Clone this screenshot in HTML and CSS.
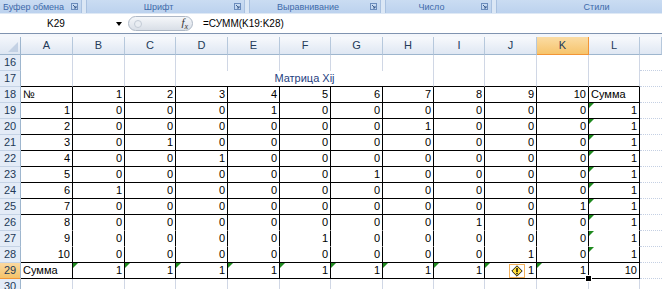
FILE: index.html
```html
<!DOCTYPE html>
<html lang="ru">
<head>
  <meta charset="UTF-8" />
  <title>Матрица Xij</title>
  <link rel="stylesheet" href="styles.css">
</head>
<body>

  <div class="ribbon">
    <div class="group g1"><span class="label">Буфер обмена</span><span class="launch"><svg width="7" height="7" viewBox="0 0 7 7"><rect x="0.5" y="0.5" width="6" height="6" fill="none" stroke="#6b8cbc"/><path d="M2 2 L5 5 M5 3 V5 H3" fill="none" stroke="#3f5f8f"/></svg></span></div>
    <div class="group g2"><span class="label">Шрифт</span><span class="launch"><svg width="7" height="7" viewBox="0 0 7 7"><rect x="0.5" y="0.5" width="6" height="6" fill="none" stroke="#6b8cbc"/><path d="M2 2 L5 5 M5 3 V5 H3" fill="none" stroke="#3f5f8f"/></svg></span></div>
    <div class="group g3"><span class="label">Выравнивание</span><span class="launch"><svg width="7" height="7" viewBox="0 0 7 7"><rect x="0.5" y="0.5" width="6" height="6" fill="none" stroke="#6b8cbc"/><path d="M2 2 L5 5 M5 3 V5 H3" fill="none" stroke="#3f5f8f"/></svg></span></div>
    <div class="group g4"><span class="label">Число</span><span class="launch"><svg width="7" height="7" viewBox="0 0 7 7"><rect x="0.5" y="0.5" width="6" height="6" fill="none" stroke="#6b8cbc"/><path d="M2 2 L5 5 M5 3 V5 H3" fill="none" stroke="#3f5f8f"/></svg></span></div>
    <div class="group g5"><span class="label">Стили</span></div>
  </div>

  <div class="fbar">
    <div class="namebox"><span class="name">K29</span><span class="arrow"></span></div>
    <div class="pill"><span class="grip"></span><span class="fx">f<sub>x</sub></span></div>
    <div class="formula">=СУММ(K19:K28)</div>
  </div>
  <div class="fbar-gap"></div>

  <div class="sheet">
    <div class="row head">
      <div class="corner"></div>
      <div class="ch">A</div><div class="ch">B</div><div class="ch">C</div><div class="ch">D</div>
      <div class="ch">E</div><div class="ch">F</div><div class="ch">G</div><div class="ch">H</div>
      <div class="ch">I</div><div class="ch">J</div><div class="ch sel">K</div><div class="ch">L</div>
      <div class="ch"></div>
    </div>

    <div class="row">
      <div class="rh">16</div>
      <div class="c"></div><div class="c"></div><div class="c"></div><div class="c"></div>
      <div class="c"></div><div class="c"></div><div class="c"></div><div class="c"></div>
      <div class="c"></div><div class="c"></div><div class="c"></div><div class="c"></div>
      <div class="c m"></div>
    </div>

    <div class="row">
      <div class="rh">17</div>
      <div class="c top"></div><div class="c top"></div><div class="c top"></div>
      <div class="c top merged">Матрица Xij</div>
      <div class="c top"></div><div class="c top"></div><div class="c top"></div><div class="c top"></div>
      <div class="c m"></div>
    </div>

    <div class="row">
      <div class="rh">18</div>
      <div class="c t l">№</div><div class="c t">1</div><div class="c t">2</div><div class="c t">3</div>
      <div class="c t">4</div><div class="c t">5</div><div class="c t">6</div><div class="c t">7</div>
      <div class="c t">8</div><div class="c t">9</div><div class="c t">10</div><div class="c t l">Сумма</div>
      <div class="c m"></div>
    </div>

    <div class="row">
      <div class="rh">19</div>
      <div class="c t">1</div><div class="c t">0</div><div class="c t">0</div><div class="c t">0</div>
      <div class="c t">1</div><div class="c t">0</div><div class="c t">0</div><div class="c t">0</div>
      <div class="c t">0</div><div class="c t">0</div><div class="c t">0</div><div class="c t g">1</div>
      <div class="c m"></div>
    </div>

    <div class="row">
      <div class="rh">20</div>
      <div class="c t">2</div><div class="c t">0</div><div class="c t">0</div><div class="c t">0</div>
      <div class="c t">0</div><div class="c t">0</div><div class="c t">0</div><div class="c t">1</div>
      <div class="c t">0</div><div class="c t">0</div><div class="c t">0</div><div class="c t g">1</div>
      <div class="c m"></div>
    </div>

    <div class="row">
      <div class="rh">21</div>
      <div class="c t">3</div><div class="c t">0</div><div class="c t">1</div><div class="c t">0</div>
      <div class="c t">0</div><div class="c t">0</div><div class="c t">0</div><div class="c t">0</div>
      <div class="c t">0</div><div class="c t">0</div><div class="c t">0</div><div class="c t g">1</div>
      <div class="c m"></div>
    </div>

    <div class="row">
      <div class="rh">22</div>
      <div class="c t">4</div><div class="c t">0</div><div class="c t">0</div><div class="c t">1</div>
      <div class="c t">0</div><div class="c t">0</div><div class="c t">0</div><div class="c t">0</div>
      <div class="c t">0</div><div class="c t">0</div><div class="c t">0</div><div class="c t g">1</div>
      <div class="c m"></div>
    </div>

    <div class="row">
      <div class="rh">23</div>
      <div class="c t">5</div><div class="c t">0</div><div class="c t">0</div><div class="c t">0</div>
      <div class="c t">0</div><div class="c t">0</div><div class="c t">1</div><div class="c t">0</div>
      <div class="c t">0</div><div class="c t">0</div><div class="c t">0</div><div class="c t g">1</div>
      <div class="c m"></div>
    </div>

    <div class="row">
      <div class="rh">24</div>
      <div class="c t">6</div><div class="c t">1</div><div class="c t">0</div><div class="c t">0</div>
      <div class="c t">0</div><div class="c t">0</div><div class="c t">0</div><div class="c t">0</div>
      <div class="c t">0</div><div class="c t">0</div><div class="c t">0</div><div class="c t g">1</div>
      <div class="c m"></div>
    </div>

    <div class="row">
      <div class="rh">25</div>
      <div class="c t">7</div><div class="c t">0</div><div class="c t">0</div><div class="c t">0</div>
      <div class="c t">0</div><div class="c t">0</div><div class="c t">0</div><div class="c t">0</div>
      <div class="c t">0</div><div class="c t">0</div><div class="c t">1</div><div class="c t g">1</div>
      <div class="c m"></div>
    </div>

    <div class="row open">
      <div class="rh">26</div>
      <div class="c t">8</div><div class="c t">0</div><div class="c t">0</div><div class="c t">0</div>
      <div class="c t">0</div><div class="c t">0</div><div class="c t">0</div><div class="c t">0</div>
      <div class="c t">1</div><div class="c t">0</div><div class="c t">0</div><div class="c t g">1</div>
      <div class="c m"></div>
    </div>

    <div class="row open">
      <div class="rh">27</div>
      <div class="c t">9</div><div class="c t">0</div><div class="c t">0</div><div class="c t">0</div>
      <div class="c t">0</div><div class="c t">1</div><div class="c t">0</div><div class="c t">0</div>
      <div class="c t">0</div><div class="c t">0</div><div class="c t">0</div><div class="c t g">1</div>
      <div class="c m"></div>
    </div>

    <div class="row">
      <div class="rh">28</div>
      <div class="c t">10</div><div class="c t">0</div><div class="c t">0</div><div class="c t">0</div>
      <div class="c t">0</div><div class="c t">0</div><div class="c t">0</div><div class="c t">0</div>
      <div class="c t">0</div><div class="c t">1</div><div class="c t">0</div><div class="c t g">1</div>
      <div class="c m"></div>
    </div>

    <div class="row">
      <div class="rh sel">29</div>
      <div class="c t l">Сумма</div><div class="c t g">1</div><div class="c t g">1</div><div class="c t g">1</div>
      <div class="c t g">1</div><div class="c t g">1</div><div class="c t g">1</div><div class="c t g">1</div>
      <div class="c t g">1</div>
      <div class="c t g">1<span class="tag"><svg width="12" height="12" viewBox="0 0 12 12"><path d="M6 0.8 L11.2 6 L6 11.2 L0.8 6 Z" fill="#ffdd3c" stroke="#222" stroke-width="1"/><rect x="5.3" y="3" width="1.4" height="4.2" fill="#000"/><rect x="5.3" y="8" width="1.4" height="1.3" fill="#000"/></svg></span></div>
      <div class="c t g">1<span class="handle"></span></div>
      <div class="c t">10</div>
      <div class="c m"></div>
    </div>

    <div class="row">
      <div class="rh">30</div>
      <div class="c"></div><div class="c"></div><div class="c"></div><div class="c"></div>
      <div class="c"></div><div class="c"></div><div class="c"></div><div class="c"></div>
      <div class="c"></div><div class="c"></div><div class="c"></div><div class="c"></div>
      <div class="c m"></div>
    </div>
  </div>

</body>
</html>
```

FILE: styles.css
```css
body {
  margin: 0;
  width: 662px;
  height: 289px;
  overflow: hidden;
  background: #fff;
  font-family: 'Liberation Sans', Arial, sans-serif;
}

/* ribbon group captions */
.ribbon {
  display: flex;
  gap: 4px;
  height: 13px;
  background: #dbe7f5;
  border-bottom: 1px solid #dfe9f5;
}

.group {
  display: flex;
  align-items: center;
  flex: none;
  box-sizing: border-box;
  background: linear-gradient(#cadcf2, #bcd2ee);
  border-left: 1px solid #a9c1e0;
  border-right: 1px solid #a9c1e0;
  font-size: 9px;
  color: #3e6aaa;
  white-space: nowrap;
}

.group .label {
  flex: 1;
  text-align: center;
}

.launch {
  width: 14px;
  display: flex;
  justify-content: center;
}

.g1 { width: 82px; border-left: none; }
.g2 { width: 159px; }
.g3 { width: 132px; }
.g4 { width: 107px; }
.g5 { flex: 1; border-right: none; }
.g5 .label { padding-left: 34px; }

/* formula bar */
.fbar {
  display: flex;
  align-items: center;
  height: 20px;
  box-sizing: border-box;
  border-bottom: 1px solid #7f93b0;
  font-size: 10px;
  color: #000;
}

.namebox {
  width: 125px;
  display: flex;
  align-items: center;
}

.name {
  width: 112px;
  text-align: center;
}

.arrow {
  margin-left: 4px;
  border-top: 4px solid #000;
  border-left: 3px solid transparent;
  border-right: 3px solid transparent;
}

.pill {
  margin-left: 3px;
  width: 65px;
  height: 15px;
  box-sizing: border-box;
  border: 1px solid #aeb8c6;
  border-radius: 8px;
  background: linear-gradient(#f5f7fa, #d9dfe7);
  display: flex;
  align-items: center;
  justify-content: space-between;
  padding: 0 4px 0 5px;
}

.grip {
  width: 6px;
  height: 6px;
  border-radius: 50%;
  background: #e9edf2;
  border: 1px solid #c3cbd6;
}

.fx {
  font-family: 'Liberation Serif', serif;
  font-style: italic;
  font-size: 11px;
  color: #333;
}

.fx sub {
  font-size: 8px;
}

.formula {
  margin-left: 10px;
}

.fbar-gap {
  height: 3px;
  background: #f3f6fb;
}

/* sheet grid */
.row {
  display: grid;
  grid-template-columns: 21px 52px 52px 51px 52px 52px 51px 52px 51px 51px 52px 52px 51px 1fr;
  height: 16px;
  font-size: 11px;
  line-height: 15px;
}

.row.head {
  height: 18px;
  line-height: 17px;
}

.corner {
  position: relative;
  background: linear-gradient(#f3f6fb, #dde6f2);
  border-right: 1px solid #9eb6ce;
  border-bottom: 1px solid #9eb6ce;
}

.corner::after {
  content: "";
  position: absolute;
  right: 2px;
  bottom: 2px;
  border-bottom: 10px solid #c3d1e4;
  border-left: 10px solid transparent;
}

.ch {
  background: linear-gradient(#f7f9fc, #dfe7f3);
  border-right: 1px solid #b6c8dc;
  border-bottom: 1px solid #9eb6ce;
  text-align: center;
  color: #233a58;
}

.ch.sel {
  background: linear-gradient(#fbdca4, #f6c46c);
  border-right-color: #f29536;
  border-bottom-color: #f29536;
}

.rh {
  background: #e4ecf7;
  border-right: 1px solid #9eb6ce;
  border-bottom: 1px solid #c5d3e5;
  text-align: center;
  color: #233a58;
}

.rh.sel {
  background: linear-gradient(#fbd9a0, #f5c36a);
  border-bottom-color: #f29536;
}

.c {
  position: relative;
  box-sizing: border-box;
  border-right: 1px solid #d0d7e5;
  padding: 0 2px;
  text-align: right;
  white-space: nowrap;
  color: #000;
}

.c.l {
  text-align: left;
}

.c.m {
  border-right: none;
  border-bottom: 1px dotted #c5d0e3;
}

.c.top {
  border-bottom: 1px solid #000;
}

.c.merged {
  grid-column: span 5;
  text-align: center;
  color: #1f3f7f;
}

.c.t {
  border-right: 1px solid #000;
  border-bottom: 1px solid #000;
}

.open .c.t {
  border-bottom-color: transparent;
}

/* green error marker */
.g::before {
  content: "";
  position: absolute;
  left: 0;
  top: 0;
  border-top: 5px solid #1f8a1f;
  border-right: 5px solid transparent;
}

.tag {
  position: absolute;
  left: 24px;
  top: 1px;
  width: 16px;
  height: 14px;
  box-sizing: border-box;
  border: 1px solid #f3b25e;
  background: #fff;
  display: flex;
  align-items: center;
  justify-content: center;
}

.handle {
  position: absolute;
  right: -4px;
  bottom: -4px;
  width: 5px;
  height: 5px;
  background: #000;
  border: 1px solid #fff;
  z-index: 2;
}
```
